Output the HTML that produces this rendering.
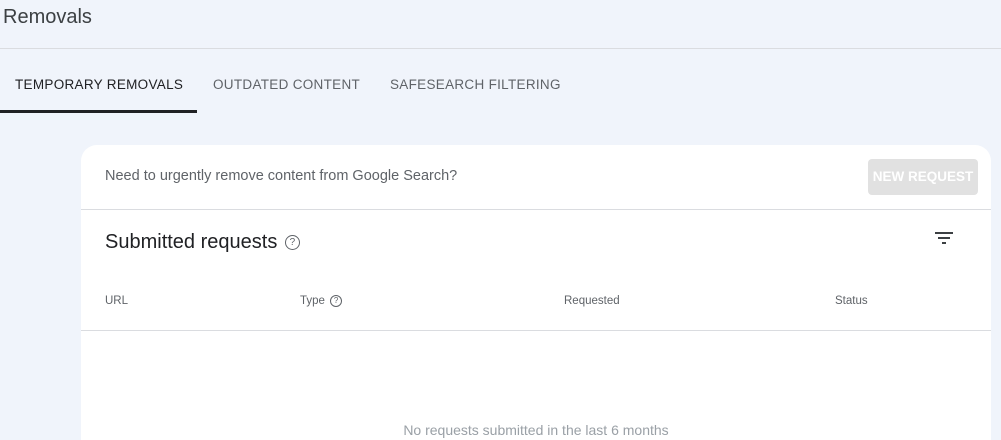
<!DOCTYPE html>
<html><head><style>
*{margin:0;padding:0;box-sizing:border-box}
html,body{width:1001px;height:440px;overflow:hidden}
body{background:#f0f4fb;font-family:"Liberation Sans",Arial,sans-serif;position:relative}
.a{position:absolute;white-space:nowrap}
.tab{font-size:13.5px;letter-spacing:.3px;font-weight:500;top:77px}
.h{font-size:11.5px;color:#5f6368}
.q{display:inline-block;border:1.3px solid #5f6368;border-radius:50%;text-align:center;font-size:10px;color:#5f6368;vertical-align:middle}
</style></head><body>
<div class="a" style="left:3px;top:6px;font-size:20px;color:#3c4043">Removals</div>
<div class="a" style="left:0;top:48px;width:1001px;height:1px;background:#dadce0"></div>
<div class="a tab" style="left:15px;color:#202124">TEMPORARY REMOVALS</div>
<div class="a tab" style="left:213px;color:#5f6368">OUTDATED CONTENT</div>
<div class="a tab" style="left:390px;color:#5f6368">SAFESEARCH FILTERING</div>
<div class="a" style="left:0;top:110px;width:197px;height:3px;background:#202124"></div>
<div class="a" style="left:81px;top:145px;width:910px;height:295px;background:#fff;border-radius:16px 16px 0 0">
 <div class="a" style="left:24px;top:23px;font-size:14.5px;color:#5f6368">Need to urgently remove content from Google Search?</div>
 <div class="a" style="left:787px;top:14px;width:110px;height:36px;background:#e1e1e1;border-radius:4px;color:#fff;font-size:13.5px;font-weight:bold;text-align:center;line-height:36px">NEW REQUEST</div>
 <div class="a" style="left:0;top:64px;width:910px;height:1px;background:#dadce0"></div>
 <div class="a" style="left:24px;top:86px;font-size:20px;color:#202124">Submitted requests <span class="q" style="width:15px;height:15px;line-height:13px;margin-left:2px">?</span></div>
 <svg class="a" style="left:853px;top:86px" width="20" height="14"><path d="M1 2h18M4 7h12M8 12h4" stroke="#3c4043" stroke-width="2"/></svg>
 <div class="a h" style="left:24px;top:150px">URL</div>
 <div class="a h" style="left:219px;top:150px">Type <span class="q" style="width:12px;height:12px;line-height:10px;font-size:8px;margin-left:2px">?</span></div>
 <div class="a h" style="left:483px;top:150px">Requested</div>
 <div class="a h" style="left:754px;top:150px">Status</div>
 <div class="a" style="left:0;top:185px;width:910px;height:1px;background:#dadce0"></div>
 <div class="a" style="left:0;width:910px;text-align:center;top:277px;font-size:14px;color:#9aa0a6">No requests submitted in the last 6 months</div>
</div>
</body></html>
